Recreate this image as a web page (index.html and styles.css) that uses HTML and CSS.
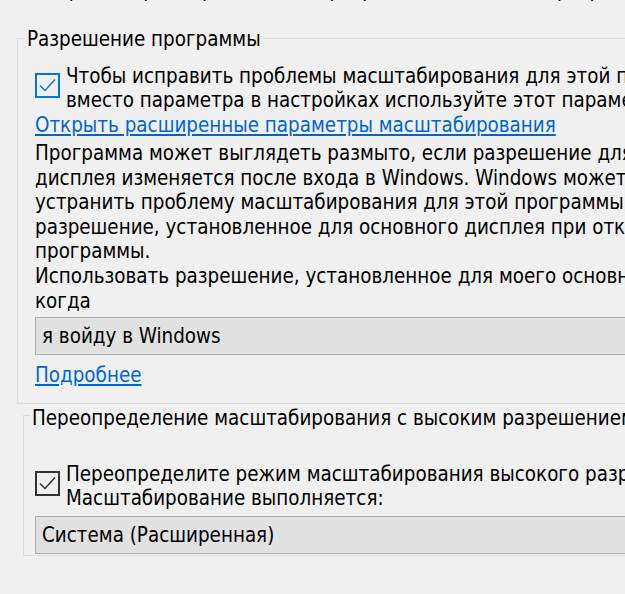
FILE: index.html
```html
<!DOCTYPE html>
<html lang="ru">
<head>
    <meta charset="UTF-8">
    <meta name="viewport" content="width=device-width, initial-scale=1.0">
    <title>Параметры высокого разрешения</title>
    <link rel="stylesheet" href="styles.css">
</head>
<body>

<div class="dialog">
    <p class="intro">Выберите параметры высокого разрешения для этой программы.</p>

    <!-- Program DPI -->
    <div class="group group-program">
        <div class="group-title">Разрешение программы</div>

        <label class="check-row">
            <span class="checkbox checkbox-focus">
                <svg viewBox="0 0 21 21" width="21" height="21"><polyline points="3,10.5 8,15.5 18,4.5" /></svg>
            </span>
            <span class="check-text">Чтобы исправить проблемы масштабирования для этой программы<br>вместо параметра в настройках используйте этот параметр.</span>
        </label>

        <a class="link link-settings" href="#">Открыть расширенные параметры масштабирования</a>

        <p class="note">Программа может выглядеть размыто, если разрешение для основного<br>дисплея изменяется после входа в Windows. Windows может попытаться<br>устранить проблему масштабирования для этой программы, используя<br>разрешение, установленное для основного дисплея при открытии этой<br>программы.<br>Использовать разрешение, установленное для моего основного дисплея,<br>когда</p>

        <div class="combo">я войду в Windows</div>

        <a class="link link-more" href="#">Подробнее</a>
    </div>

    <!-- High DPI scaling override -->
    <div class="group group-override">
        <div class="group-title">Переопределение масштабирования с высоким разрешением</div>

        <label class="check-row">
            <span class="checkbox">
                <svg viewBox="0 0 21 21" width="21" height="21"><polyline points="3,10.5 8,15.5 18,4.5" /></svg>
            </span>
            <span class="check-text">Переопределите режим масштабирования высокого разрешения.<br>Масштабирование выполняется:</span>
        </label>

        <div class="combo combo-mode">Система (Расширенная)</div>
    </div>
</div>

</body>
</html>
```

FILE: styles.css
```css
body {
    margin: 0;
    background-color: #f0f0f0;
    color: #000;
    font-family: "DejaVu Sans", Tahoma, sans-serif;
    font-stretch: semi-condensed;
    font-size: 20.4px;
    line-height: 24px;
    overflow: hidden;
}
.dialog {
    width: 780px;
    white-space: nowrap;
}
.intro {
    margin: -22px 0 0 19px;
}
.group {
    border: 1px solid #dcdcdc;
}
.group-title {
    width: fit-content;
    padding: 0 2px;
    background-color: #f0f0f0;
}
.group-program {
    margin: 36px 0 0 17px;
    padding: 0 0 16px 17px;
}
.group-program .group-title {
    margin: -12px 0 0 -10px;
}
.group-override {
    margin: 11px 0 0 23px;
    padding: 0 0 1px 11px;
}
.group-override .group-title {
    margin: -10px 0 0 -5px;
}
.check-row {
    display: flex;
    align-items: flex-start;
    gap: 6px;
    margin-top: 13px;
}
.group-override .check-row {
    margin-top: 32px;
}
.checkbox {
    display: flex;
    flex: none;
    width: 21px;
    height: 21px;
    margin-top: 9px;
    border: 2px solid #333;
}
.checkbox polyline {
    fill: none;
    stroke: #333;
    stroke-width: 1.5;
}
.checkbox-focus {
    border-color: #0078d7;
}
.checkbox-focus polyline {
    stroke: #0078d7;
}
.link {
    display: block;
    width: fit-content;
    color: #0066cc;
    text-decoration: underline;
}
.link-settings {
    margin-top: 1px;
}
.note {
    margin: 4px 0 0;
    line-height: 24.6px;
}
.combo {
    height: 36px;
    margin-top: 4px;
    padding-left: 6px;
    line-height: 36px;
    background-color: #e1e1e1;
    border: 1px solid #adadad;
}
.combo-mode {
    margin-top: 6px;
}
.link-more {
    margin-top: 8px;
}
```
